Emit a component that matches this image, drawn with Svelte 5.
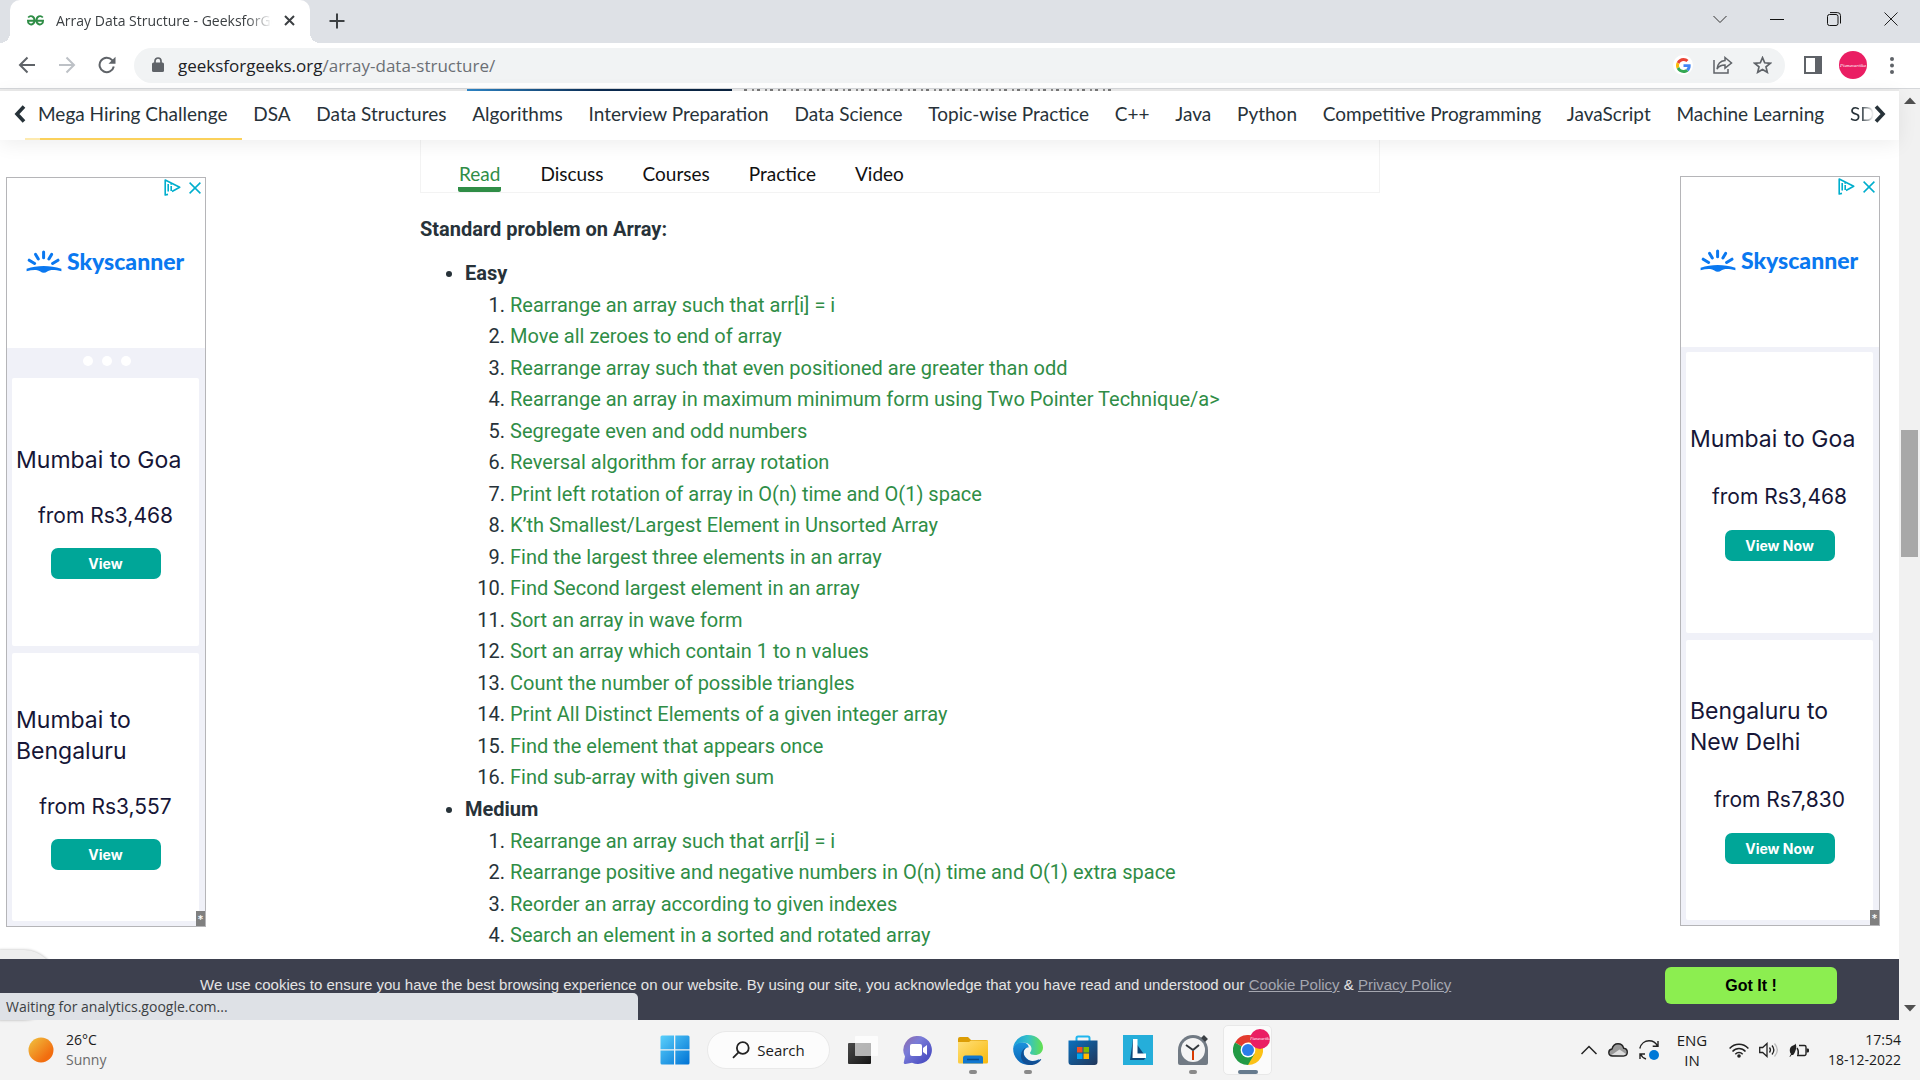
<script>
  const navItems = [
    'Mega Hiring Challenge', 'DSA', 'Data Structures', 'Algorithms', 'Interview Preparation',
    'Data Science', 'Topic-wise Practice', 'C++', 'Java', 'Python', 'Competitive Programming',
    'JavaScript', 'Machine Learning', 'SDE'
  ];
  const articleTabs = ['Read', 'Discuss', 'Courses', 'Practice', 'Video'];
  const levels = [
    {
      name: 'Easy',
      problems: [
        'Rearrange an array such that arr[i] = i',
        'Move all zeroes to end of array',
        'Rearrange array such that even positioned are greater than odd',
        'Rearrange an array in maximum minimum form using Two Pointer Technique/a>',
        'Segregate even and odd numbers',
        'Reversal algorithm for array rotation',
        'Print left rotation of array in O(n) time and O(1) space',
        'K’th Smallest/Largest Element in Unsorted Array',
        'Find the largest three elements in an array',
        'Find Second largest element in an array',
        'Sort an array in wave form',
        'Sort an array which contain 1 to n values',
        'Count the number of possible triangles',
        'Print All Distinct Elements of a given integer array',
        'Find the element that appears once',
        'Find sub-array with given sum'
      ]
    },
    {
      name: 'Medium',
      problems: [
        'Rearrange an array such that arr[i] = i',
        'Rearrange positive and negative numbers in O(n) time and O(1) extra space',
        'Reorder an array according to given indexes',
        'Search an element in a sorted and rotated array'
      ]
    }
  ];
  const ads = {
    left: {
      action: 'View',
      dots: true,
      offers: [
        { route: ['Mumbai to Goa'], price: 'from Rs3,468' },
        { route: ['Mumbai to', 'Bengaluru'], price: 'from Rs3,557' }
      ]
    },
    right: {
      action: 'View Now',
      dots: false,
      offers: [
        { route: ['Mumbai to Goa'], price: 'from Rs3,468' },
        { route: ['Bengaluru to', 'New Delhi'], price: 'from Rs7,830' }
      ]
    }
  };
</script>

{#snippet banner(ad, side)}
  <aside class="ad {side}">
    <div class="ad-head">
      <div class="ad-tools">
        <button aria-label="Ad choices">
          <svg width="17" height="17" viewBox="0 0 17 17" fill="none" stroke="#00aecd" stroke-width="1.6" stroke-linejoin="round"><path d="M4 15.400 1.200 16V1l14.500 7.300-7.700 4.200M4.200 12.500V5" /><path d="M7.200 7v5M7.200 4.300v1.500" /></svg>
        </button>
        <button aria-label="Close ad">
          <svg width="12" height="12" viewBox="0 0 12 12" fill="none" stroke="#00aecd" stroke-width="1.5"><path d="m.6.6 10.8 10.8M11.4.6.6 11.4" /></svg>
        </button>
      </div>
      <div class="brand">
        <svg width="36" height="23" viewBox="0 0 36 23" fill="none" stroke="#0a78f0" stroke-width="3" stroke-linecap="round">
          <path d="M17.6 2v5.8M9.6 4.4l2.7 4.6M25.6 4.4 22.9 9M3.2 10.2l5.4 3.3M32 10.2l-5.4 3.3" />
          <path d="M.6 18.8c11-3.8 23-3.8 34.8 0v2.4c-4-.8-7.600-1.400-11-1-2.300.2-4 2.600-6.600 2.600s-4.200-2.400-6.600-2.600c-3.400-.4-7 .2-10.600 1z" fill="#0a78f0" stroke="none" />
        </svg>
        <span>Skyscanner</span>
      </div>
    </div>
    {#if ad.dots}
      <div class="dots"><i></i><i></i><i></i></div>
    {/if}
    <div class="offers">
      {#each ad.offers as offer}
        <section class="offer">
          <h3>{#each offer.route as line}<span>{line}</span>{/each}</h3>
          <p>{offer.price}</p>
          <button>{ad.action}</button>
        </section>
      {/each}
    </div>
    <span class="corner">*</span>
  </aside>
{/snippet}

<div class="window">
  <header class="tabstrip">
    <div class="tab">
      <svg class="favicon" width="17" height="11" viewBox="0 0 17 11" fill="none" stroke="#2f8d46" stroke-width="1.9"><path d="M1.200 2.500C3.500-.2 7.500 1.400 7.500 5.500S3.200 10.600 1.300 7.800L1 5.700h15l-.3 2.100c-1.900 2.800-6.200 1.800-6.200-2.300s4-5.700 6.300-3" /></svg>
      <span class="tab-title">Array Data Structure - GeeksforGeeks</span>
      <button aria-label="Close tab"><svg width="11" height="11" viewBox="0 0 11 11" stroke="#3c4043" stroke-width="2"><path d="m1 1 9 9M10 1l-9 9" /></svg></button>
    </div>
    <button class="new-tab" aria-label="New tab"><svg width="16" height="16" viewBox="0 0 16 16" stroke="#3c4043" stroke-width="2"><path d="M8 .5v15M.5 8h15" /></svg></button>
    <div class="controls">
      <button aria-label="Search tabs"><svg width="14" height="14" viewBox="0 0 14 14" fill="none" stroke="#333"><path d="m.5 4 6.500 6.500L13.500 4" /></svg></button>
      <button aria-label="Minimize"><svg width="14" height="14" viewBox="0 0 14 14" fill="none" stroke="#111"><path d="M0 7.500h14" /></svg></button>
      <button aria-label="Restore"><svg width="14" height="14" viewBox="0 0 14 14" fill="none" stroke="#111"><rect x=".5" y="2.500" width="10.500" height="11" rx="2" /><path d="M3 .6h7.500a3 3 0 0 1 3 3v7.900" /></svg></button>
      <button aria-label="Close window"><svg width="14" height="14" viewBox="0 0 14 14" fill="none" stroke="#222"><path d="m.5.5 13 13M13.500.5l-13 13" /></svg></button>
    </div>
  </header>

  <div class="toolbar">
    <button aria-label="Back"><svg width="18" height="18" viewBox="0 0 18 18" fill="none" stroke="#5f6368" stroke-width="2"><path d="M17 9H2.500M9.500 1.500 2 9l7.500 7.500" /></svg></button>
    <button aria-label="Forward"><svg width="18" height="18" viewBox="0 0 18 18" fill="none" stroke="#bdc1c6" stroke-width="2"><path d="M1 9h14.500M8.500 1.500 16 9l-7.500 7.500" /></svg></button>
    <button aria-label="Reload"><svg width="18" height="18" viewBox="0 0 18 18" fill="none" stroke="#5f6368" stroke-width="2"><path d="M15.800 10.500A7.200 7.200 0 1 1 14.200 4.200L16 6" /><path d="M17.500.8v7h-7z" fill="#5f6368" stroke="none" /></svg></button>
    <div class="omnibox">
      <svg class="lock" width="12" height="16" viewBox="0 0 12 16" fill="#5f6368"><rect y="5.500" width="12" height="9.500" rx="1.500" /><path d="M3 6V4a3 3 0 0 1 6 0v2" fill="none" stroke="#5f6368" stroke-width="1.700" /></svg>
      <span class="url">geeksforgeeks.org<span>/array-data-structure/</span></span>
      <button class="google" aria-label="Google">
        <svg width="15" height="15" viewBox="0 0 48 48"><path fill="#EA4335" d="M24 9.500c3.540 0 6.710 1.220 9.210 3.600l6.850-6.850C35.900 2.380 30.470 0 24 0 14.620 0 6.510 5.380 2.560 13.220l7.980 6.190C12.430 13.720 17.740 9.500 24 9.500z" /><path fill="#4285F4" d="M46.980 24.550c0-1.570-.15-3.090-.38-4.550H24v9.020h12.940c-.58 2.960-2.260 5.480-4.780 7.180l7.730 6c4.510-4.180 7.090-10.360 7.090-17.650z" /><path fill="#FBBC05" d="M10.530 28.590A14.500 14.500 0 0 1 9.770 24c0-1.600.27-3.140.76-4.590l-7.980-6.190A23.900 23.900 0 0 0 0 24c0 3.880.92 7.540 2.560 10.780z" /><path fill="#34A853" d="M24 48c6.480 0 11.930-2.130 15.890-5.810l-7.730-6c-2.150 1.450-4.920 2.300-8.160 2.300-6.260 0-11.570-4.220-13.470-9.910l-7.980 6.190C6.510 42.620 14.620 48 24 48z" /></svg>
      </button>
      <button aria-label="Share"><svg width="20" height="18" viewBox="0 0 20 18" fill="none" stroke="#5f6368" stroke-width="1.500"><path d="M1 4v13h14v-4" /><path d="M12 1.500 18.500 7 12 12.200V9c-4 0-6.300 1.200-8 4 .5-4.500 3-8 8-8.500z" /></svg></button>
      <button aria-label="Bookmark"><svg width="19" height="18" viewBox="0 0 19 18" fill="none" stroke="#5f6368" stroke-width="1.700"><path d="m9.500 1.700 2.200 5.100 5.500.5-4.200 3.600 1.300 5.400-4.800-2.900-4.800 2.900L6 10.900 1.800 7.300l5.500-.5z" /></svg></button>
    </div>
    <button aria-label="Side panel"><svg width="18" height="18" viewBox="0 0 18 18" fill="none" stroke="#5f6368"><rect x="1" y="1" width="16" height="16" stroke-width="2" /><path d="M11.500 1h5.500v16h-5.500z" fill="#5f6368" /></svg></button>
    <button class="avatar" aria-label="Profile">Pianavartika</button>
    <button aria-label="Menu"><svg width="4" height="17" viewBox="0 0 4 17" fill="#5f6368"><circle cx="2" cy="2" r="2" /><circle cx="2" cy="8.500" r="2" /><circle cx="2" cy="15" r="2" /></svg></button>
  </div>

  <div class="viewport">
    <div class="page">
      <div class="peek"><i class="thumb-edge"></i><i class="text-edge"></i></div>
      <nav class="topics">
        <button aria-label="Scroll left"><svg width="12" height="18" viewBox="0 0 12 18" fill="none" stroke="#273239" stroke-width="3.600"><path d="M10 1.500 3 9l7 7.500" /></svg></button>
        <ul>
          {#each navItems as item, i}
            <li class:current={i === 0}><a href="#{i}">{item}</a></li>
          {/each}
        </ul>
        <button class="next" aria-label="Scroll right"><svg width="12" height="18" viewBox="0 0 12 18" fill="none" stroke="#273239" stroke-width="3.600"><path d="m2 1.500 7 7.500-7 7.500" /></svg></button>
      </nav>

      <main>
        {@render banner(ads.left, 'left')}
        <article>
          <div class="article-tabs">
            {#each articleTabs as tab, i}
              <a href="#{tab}" class:active={i === 0}>{tab}</a>
            {/each}
          </div>
          <h2>Standard problem on Array:</h2>
          <ul class="levels">
            {#each levels as level}
              <li>
                <strong>{level.name}</strong>
                <ol>
                  {#each level.problems as problem}
                    <li><a href="#problem">{problem}</a></li>
                  {/each}
                </ol>
              </li>
            {/each}
          </ul>
        </article>
        {@render banner(ads.right, 'right')}
      </main>

      <div class="side-chip"></div>
      <footer class="cookies">
        <p>We use cookies to ensure you have the best browsing experience on our website. By using our site, you acknowledge that you have read and understood our <a href="#cookie">Cookie Policy</a> &amp; <a href="#privacy">Privacy Policy</a></p>
        <button>Got It !</button>
      </footer>
      <div class="status">Waiting for analytics.google.com...</div>
    </div>

    <div class="scrollbar">
      <svg width="12" height="7" viewBox="0 0 12 7" fill="#505050"><path d="M0 7 6 .5 12 7z" /></svg>
      <div class="track"><div class="thumb"></div></div>
      <svg width="12" height="7" viewBox="0 0 12 7" fill="#505050"><path d="m0 0 6 6.500L12 0z" /></svg>
    </div>
  </div>

  <footer class="taskbar">
    <div class="weather">
      <svg width="26" height="26" viewBox="0 0 26 26"><defs><linearGradient id="sun" x1="0" y1="0" x2="1" y2="1"><stop offset=".1" stop-color="#f0b93a" /><stop offset=".75" stop-color="#f26d0f" /></linearGradient></defs><circle cx="13" cy="13" r="12.500" fill="url(#sun)" /></svg>
      <div><span>26°C</span><span class="muted">Sunny</span></div>
    </div>

    <div class="apps">
      <button class="app" aria-label="Start">
        <svg width="30" height="30" viewBox="0 0 30 30"><defs><linearGradient id="win" x1="0" y1="0" x2="1" y2="1"><stop offset="0" stop-color="#5ad0fb" /><stop offset="1" stop-color="#0072d4" /></linearGradient></defs><path fill="url(#win)" d="M2 .5h12v13.700H.5V2A1.500 1.500 0 0 1 2 .5zm13.300 0H28A1.500 1.500 0 0 1 29.500 2v12.200H15.300zM.5 15.500H14v14H2A1.500 1.500 0 0 1 .5 28zm14.800 0h14.200V28a1.500 1.500 0 0 1-1.500 1.500H15.300z" /></svg>
      </button>
      <button class="search">
        <svg width="18" height="18" viewBox="0 0 18 18" fill="none" stroke="#222" stroke-width="1.800"><circle cx="10.800" cy="7" r="5.900" /><path d="m6.500 11.300-5.500 5.500" /></svg>
        Search
      </button>
      <button class="app" aria-label="Task view">
        <svg width="30" height="28" viewBox="0 0 30 28"><defs><linearGradient id="dark" x1="0" y1="0" x2="1" y2="1"><stop offset="0" stop-color="#4a4a4a" /><stop offset="1" stop-color="#161616" /></linearGradient></defs><rect y="7" width="23" height="21" rx="1" fill="url(#dark)" /><rect x="7" width="23" height="20" rx="1" fill="#fff" opacity=".72" /><rect x="7" y="7" width="16" height="13" fill="#aaa" opacity=".6" /></svg>
      </button>
      <button class="app" aria-label="Chat">
        <svg width="30" height="28" viewBox="0 0 30 28"><defs><linearGradient id="chat" x1="0" y1="0" x2="1" y2="1"><stop offset="0" stop-color="#9268a6" /><stop offset=".35" stop-color="#7a7cd8" /><stop offset=".8" stop-color="#4f52c4" /></linearGradient></defs><path fill="url(#chat)" d="M15 0a14 14 0 1 1-6 26.700L2.500 28c-1.500.2-2-.6-1.700-1.800L2 20.500A14 14 0 0 1 15 0z" /><rect x="7" y="8" width="12" height="12" rx="2" fill="#fff" /><path fill="#fff" d="m20 12 4-3v10l-4-3z" /></svg>
      </button>
      <button class="app open" aria-label="Files">
        <svg width="30" height="27" viewBox="0 0 30 27"><defs><linearGradient id="folder" x1="0" y1="0" x2="1" y2="1"><stop offset="0" stop-color="#ffe07a" /><stop offset="1" stop-color="#f8b90d" /></linearGradient></defs><path fill="#dc9d05" d="M0 2A2 2 0 0 1 2 0h8l3 3h15a2 2 0 0 1 2 2v8H0z" /><path fill="url(#folder)" d="M0 5h11l2-1.500h17V25a1.500 1.500 0 0 1-1.500 1.500h-27A1.500 1.500 0 0 1 0 25z" /><path fill="#1177cf" d="M5 26.500V21a2.500 2.500 0 0 1 2.500-2.500h15A2.500 2.500 0 0 1 25 21v5.500z" /><path stroke="#0a4a86" stroke-width="1.500" d="M9 22.500h12" /></svg>
      </button>
      <button class="app open" aria-label="Edge">
        <svg width="30" height="30" viewBox="0 0 30 30"><defs><linearGradient id="edgeTop" x1="0" y1=".4" x2="1" y2=".4"><stop offset="0" stop-color="#1a9bdc" /><stop offset=".5" stop-color="#35c1c8" /><stop offset="1" stop-color="#64e14c" /></linearGradient><linearGradient id="edgeLow" x1="0" y1="0" x2="0" y2="1"><stop offset="0" stop-color="#1b93dd" /><stop offset="1" stop-color="#0a63b5" /></linearGradient></defs><path fill="url(#edgeLow)" d="M.2 13C2 8 7 6.500 11 7.500s5 4 4.500 5C12 12 9 17 12 21.500s8 6 14.500 2.500C22 31 11 32 5 25.500.8 21 0 17 .2 13z" /><path fill="#114f94" d="M13 12.500c-3.500 3-3.500 8 .5 11.500 4 3.200 10 2.500 14 .2.500-.3.900.1.500.8C25 29 20 30.500 16 30 9.500 29 7.500 23.500 8 20c.3-4 2.500-6.500 5-7.500z" /><path fill="url(#edgeTop)" d="M.2 13C1 5.500 7.500 0 15 0c9 0 15 6.500 15 12.500 0 5-4 7.500-8 7.500-3 0-5-1-5-2s1.500-1.500 1.500-4.500S15 7.500 10 7.500 1.500 10 .2 13z" /></svg>
      </button>
      <button class="app" aria-label="Store">
        <svg width="30" height="30" viewBox="0 0 30 30"><defs><linearGradient id="store" x1="0" y1="0" x2="1" y2="1"><stop offset="0" stop-color="#0b70bd" /><stop offset="1" stop-color="#20365a" /></linearGradient></defs><path d="M8.500 6V3a1.500 1.500 0 0 1 1.500-1.500h10A1.500 1.500 0 0 1 21.500 3v3" fill="none" stroke="#1fb5ee" stroke-width="2" /><path fill="url(#store)" d="M.5 5.500h29V27a3 3 0 0 1-3 3h-23a3 3 0 0 1-3-3z" /><path fill="#f25022" d="M9 12h5.500v5.500H9z" /><path fill="#7fba00" d="M15.500 12H21v5.500h-5.500z" /><path fill="#00a4ef" d="M9 18.500h5.500V24H9z" /><path fill="#ffb900" d="M15.500 18.500H21V24h-5.500z" /></svg>
      </button>
      <button class="app" aria-label="L app">
        <svg width="30" height="30" viewBox="0 0 30 30"><path fill="#25aeda" d="M0 0h30v30H0z" /><path fill="#0c4a7c" d="m10 4-3 21h14l2-3z" /><path fill="#fff" d="M10 4h4.500v14.500H23V23H9.500z" /></svg>
      </button>
      <button class="app open" aria-label="Clock">
        <svg width="30" height="30" viewBox="0 0 30 30"><path fill="#717a84" d="M0 15A15 15 0 0 1 15 0a15 15 0 0 1 15 15v13a2 2 0 0 1-2 2H2a2 2 0 0 1-2-2z" /><path stroke="#3b4045" stroke-width="4" d="m24.500 1.500 4 4" /><circle cx="15" cy="15" r="12" fill="#f4f4f4" /><path d="m8 10 7 5 6-5" fill="none" stroke="#33383d" stroke-width="2" /><path stroke="#d83b01" stroke-width="2" d="M15 16v9" /></svg>
      </button>
      <button class="app open current" aria-label="Chrome">
        <svg width="30" height="30" viewBox="0 0 30 30"><path fill="#e33b2e" d="M15 15 2 7.500A15 15 0 0 1 28 7.500z" /><path fill="#fbc116" d="M15 15V7.500h13A15 15 0 0 1 15 30z" /><path fill="#229a45" d="M2 7.500A15 15 0 0 0 15 30l6.500-11.300L15 15z" /><circle cx="15" cy="15" r="7.400" fill="#fff" /><circle cx="15" cy="15" r="6" fill="#2b7de9" /></svg>
        <span class="badge">Pianavartika</span>
      </button>
    </div>

    <div class="tray">
      <svg width="16" height="10" viewBox="0 0 16 10" fill="none" stroke="#222" stroke-width="1.500"><path d="m.5 9 7.500-7.500L15.500 9" /></svg>
      <svg width="20" height="14" viewBox="0 0 20 14" stroke="#222" stroke-width="1.400"><path fill="#999" d="M4.500 13C2 13 .8 11.500.8 9.500S2 6.300 4 6c.8-3.200 3-5.200 6-5.200 3 0 5 1.800 5.600 4.400 2.200.2 3.700 1.600 3.700 3.900S17.800 13 15.500 13z" /><path fill="#ddd" stroke="none" d="m3.500 12 8-5.500 6.500 4.500-2 1.200z" /></svg>
      <svg width="20" height="20" viewBox="0 0 20 20" fill="none" stroke="#222" stroke-width="1.400"><path d="M.8 8.500C2 3.500 6 .8 10 .8c4 0 7 2 8.500 5.200M19 1v5.300h-5.300M7 19c-2.500-.8-4.500-2.500-5.500-5M1 19v-5h5" /><circle cx="15" cy="15" r="5" fill="#0078d7" stroke="none" /></svg>
      <div class="lang"><span>ENG</span><span>IN</span></div>
      <div class="tray-group">
        <svg width="20" height="15" viewBox="0 0 20 15" fill="none" stroke="#222" stroke-width="1.500"><path d="M.6 5.500c5.300-5.600 13.500-5.600 18.800 0M3.500 8.500c3.700-4 9.300-4 13 0M6.300 11.200c2.200-2.300 5.200-2.300 7.400 0" /><circle cx="10" cy="13" r="1.800" fill="#222" stroke="none" /></svg>
        <svg width="20" height="16" viewBox="0 0 20 16" fill="none" stroke="#222" stroke-width="1.300"><path d="M.7 5.500h3L8 1.500v13l-4.300-4h-3z" /><path d="M10.500 5.500c1.200 1.500 1.200 3.500 0 5M13 3.500c2.300 2.800 2.300 6.200 0 9" /><path d="M15.500 1.500c3.500 4 3.500 9 0 13" stroke="#bbb" /></svg>
        <svg width="20" height="15" viewBox="0 0 20 15" fill="none" stroke="#222" stroke-width="1.400"><path d="M10 2.500h5.500A1.500 1.500 0 0 1 17 4v7a1.500 1.500 0 0 1-1.500 1.500H8" /><path fill="#222" stroke="none" d="M17.500 5.500h1.200a1.300 1.300 0 0 1 1.300 1.300v1.400a1.300 1.300 0 0 1-1.300 1.300h-1.200zM6.500.5c1.200 2.500 1 5-.5 8.500s-2 3-3.500 3L1 14l-.5-.6L2 11C0 8.500.5 4.500 3 3c1.500-.8 3-1 3.500-2.500z" /><path d="M8 5c1.500 2 1.800 4 1 7" /></svg>
      </div>
      <div class="clock"><span>17:54</span><span>18-12-2022</span></div>
    </div>
  </footer>
</div>

<style>
  :global(body) { margin: 0; }
  * { box-sizing: border-box; }
  button { border: 0; padding: 0; background: none; font: inherit; color: inherit; display: flex; align-items: center; justify-content: center; }
  svg { display: block; flex: none; }
  a { text-decoration: none; color: inherit; }
  ul, ol, p, h2, h3 { margin: 0; padding: 0; }

  .window { height: 100vh; display: flex; flex-direction: column; overflow: hidden; background: #fff; font-family: "Open Sans", "Noto Sans", sans-serif; }

  .tabstrip { height: 43px; flex: none; display: flex; align-items: stretch; background: #dee1e6; padding-left: 10px; }
  .tab { position: relative; width: 300px; display: flex; align-items: center; gap: 12px; padding: 0 15px 2px 17px; background: #fff; border-radius: 10px 10px 0 0; font-size: 14px; color: #3c4043; }
  .tab::before, .tab::after { content: ""; position: absolute; bottom: 0; width: 10px; height: 10px; }
  .tab::before { left: -10px; background: radial-gradient(circle at 0 0, #dee1e6 10px, #fff 10px); }
  .tab::after { right: -10px; background: radial-gradient(circle at 100% 0, #dee1e6 10px, #fff 10px); }
  .tab-title { flex: 1; overflow: hidden; white-space: nowrap; mask-image: linear-gradient(90deg, #000 88%, transparent); }
  .new-tab { margin-left: 19px; padding-bottom: 2px; }
  .controls { margin-left: auto; display: flex; align-items: center; padding: 0 22px 6px 0; gap: 43px; }

  .toolbar { height: 46px; flex: none; display: flex; align-items: center; gap: 22px; padding: 0 26px 1px 18px; border-bottom: 1px solid #d5d7da; }
  .omnibox { flex: 1; height: 35px; margin-left: -4px; margin-right: -3px; padding: 0 13px 0 18px; display: flex; align-items: center; gap: 20px; border-radius: 18px; background: #f1f3f4; }
  .url { flex: 1; margin-left: -6px; font-size: 17px; color: #202124; }
  .url span { color: #6b6f74; }
  .google { width: 20px; height: 20px; border-radius: 50%; background: #fff; }
  .avatar { width: 28px; height: 28px; margin: 0 1px 0 -5px; border-radius: 50%; background: #ea1e63; color: #fff; font: italic 5px "Liberation Serif", serif; overflow: hidden; }

  .viewport { flex: 1; min-height: 0; display: flex; }
  .page { position: relative; flex: 1; min-width: 0; display: flex; flex-direction: column; }
  .peek { height: 2px; flex: none; display: flex; gap: 12px; padding-left: 467px; background: #ebebeb; }
  .thumb-edge { width: 265px; background: linear-gradient(90deg, #2d86c8, #0b2b52 50%, #0b2340); }
  .text-edge { width: 372px; background: repeating-linear-gradient(90deg, #777 0 3px, transparent 3px 8px, #888 8px 10px, transparent 10px 13px); }

  .topics { position: relative; z-index: 1; height: 49px; flex: none; display: flex; align-items: stretch; padding: 0 13px 0 14px; background: #fff; box-shadow: 0 4px 20px rgba(0, 0, 0, 0.07); font: 19px Lato, sans-serif; color: #273239; }
  .topics button { padding-bottom: 4px; }
  .topics ul { flex: 1; min-width: 0; display: flex; align-items: stretch; justify-content: space-between; list-style: none; padding: 0 0 0 12px; }
  .topics li { position: relative; display: flex; align-items: center; padding-bottom: 4px; white-space: nowrap; }
  .topics li:last-child { width: 24px; overflow: hidden; mask-image: linear-gradient(90deg, #000 40%, transparent); }
  .current::after { content: ""; position: absolute; left: -13px; right: -15px; bottom: 0; height: 2px; background: linear-gradient(90deg, #fdeab0 15px, #fbd15b 15px); }

  main { flex: 1; min-height: 0; overflow: hidden; display: flex; align-items: flex-start; padding: 0 19px 0 6px; }
  article { flex: 1; max-width: 960px; margin: 0 auto 0 214px; color: #273239; font: 20px/32px Roboto, sans-serif; }
  .article-tabs { height: 53px; display: flex; gap: 39px; padding: 20px 37px 0; border: 1px solid #f3f3f3; border-top: 0; color: #111; font: 19px/27px Lato, sans-serif; }
  .article-tabs .active { padding: 0 1px; color: #2f8d46; border-bottom: 5px solid #2f8d46; border-radius: 0 0 2px 2px; }
  h2 { margin: 20px 0 12px; font-size: 20px; font-weight: 700; }
  .levels { padding-left: 45px; }
  .levels ol { padding-left: 45px; }
  ol li:nth-child(even) { line-height: 31px; }
  ol a { color: #2f8d46; }

  .ad { position: relative; flex: none; width: 200px; height: 750px; margin-top: 37px; display: flex; flex-direction: column; border: 1px solid #b5b5b8; background: #f0f1f8; font-family: Inter, sans-serif; color: #161637; }
  .ad.right { margin-top: 36px; }
  .ad-head { height: 170px; background: #fff; }
  .ad-tools { display: flex; justify-content: flex-end; align-items: center; gap: 8px; height: 19px; padding-right: 4px; }
  .brand { display: flex; align-items: center; gap: 5px; padding: 48px 0 0 19px; font: 900 23px/33px Lato, sans-serif; color: #0a78f0; }
  .dots { height: 25px; display: flex; justify-content: center; align-items: center; gap: 9px; padding-left: 2px; }
  .dots i { width: 10px; height: 10px; border-radius: 50%; background: #fff; }
  .offers { flex: 1; display: grid; grid-template-rows: 1fr 1fr; gap: 7px; padding: 5px 6px 5px 5px; }
  .offer { display: flex; flex-direction: column; justify-content: center; padding: 0 4px; border-radius: 2px; background: #fff; }
  .offer h3 { font-size: 23px; font-weight: 400; line-height: 31px; white-space: nowrap; }
  .offer h3 span { display: block; }
  .offer p { margin: 25px 0 17px; text-align: center; font-size: 21px; line-height: 30px; white-space: nowrap; }
  .right .offer p { margin: 27px 0 18px; }
  .offer button { align-self: center; width: 110px; height: 31px; border-radius: 7px; background: #00a698; color: #fff; font-size: 14px; font-weight: 700; }
  .corner { position: absolute; right: 0; bottom: 0; width: 9px; height: 15px; background: #808080; color: #fff; font-size: 12px; line-height: 18px; text-align: center; }

  .side-chip { position: absolute; left: -30px; bottom: 0; width: 86px; height: 70px; border-radius: 32px; background: #eee; box-shadow: 0 0 3px rgba(0, 0, 0, 0.3); }
  .cookies { position: relative; height: 61px; flex: none; display: flex; align-items: flex-start; justify-content: space-between; padding: 8px 62px 0 200px; background: #3d404e; color: #e4e4e4; font: 15px/36px "Liberation Sans", Arial, sans-serif; }
  .cookies a { color: #a5a7b0; text-decoration: underline; }
  .cookies button { width: 172px; height: 37px; border-radius: 6px; background: #8cee50; color: #000; font-weight: 700; font-size: 16px; }
  .status { position: absolute; left: 0; bottom: 0; width: 638px; height: 27px; padding-left: 6px; border-radius: 0 5px 0 0; background: #dee1e6; color: #3c4043; font-size: 14px; line-height: 27px; }

  .scrollbar { width: 21px; flex: none; display: flex; flex-direction: column; align-items: center; justify-content: space-between; padding: 8px 0; background: #f1f1f1; }
  .track { flex: 1; padding-top: 326px; }
  .thumb { width: 17px; height: 127px; background: #a8a8a8; }

  .taskbar { height: 60px; flex: none; display: grid; grid-template-columns: 1fr auto 1fr; align-items: center; background: #f3f3f3; color: #1b1b1b; font-size: 14px; line-height: 20px; }
  .taskbar span { display: block; }
  .weather { display: flex; align-items: center; gap: 12px; padding-left: 28px; }
  .muted { color: #6a6a6a; }
  .apps { display: flex; align-items: center; height: 60px; padding-left: 2px; }
  .app { position: relative; width: 55px; height: 60px; }
  .app svg { position: relative; }
  .open::after { content: ""; position: absolute; bottom: 6px; left: 24px; width: 8px; height: 4px; border-radius: 2px; background: #8a8a8a; }
  .app.current::before { content: ""; position: absolute; inset: 5px 3px; border-radius: 5px; background: #fbfbfb; border: 1px solid #e8e8e8; }
  .app.current::after { left: 18px; right: auto; width: 20px; height: 4px; background: #667b8e; }
  .badge { position: absolute; top: 9px; right: 5px; width: 20px; height: 20px; border-radius: 50%; background: #ea1e63; color: #fff; font: italic 4px/20px "Liberation Serif", serif; overflow: hidden; }
  .search { width: 123px; height: 38px; margin: 0 5px; gap: 7px; border-radius: 19px; background: #fcfcfc; border: 1px solid #e9e9e9; font-size: 15px; }
  .tray { justify-self: end; display: flex; align-items: center; padding-right: 19px; }
  .tray > svg + svg { margin-left: 11px; }
  .lang { width: 34px; margin-left: 16px; text-align: center; font-size: 15px; }
  .tray-group { display: flex; align-items: center; gap: 10px; margin-left: 20px; }
  .clock { width: 92px; text-align: right; }
</style>
